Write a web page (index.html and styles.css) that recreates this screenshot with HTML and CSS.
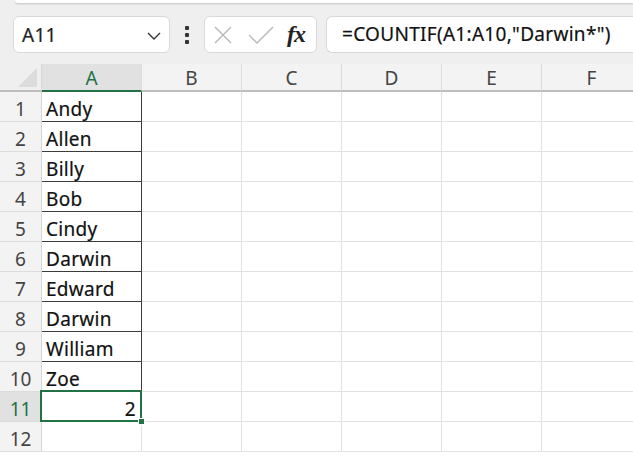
FILE: index.html
```html
<!DOCTYPE html>
<html>
<head>
<meta charset="utf-8">
<link rel="stylesheet" href="styles.css">
</head>
<body>
<div class="app">
  <div class="topstrip"><div class="ribbon-edge"></div></div>
  <div class="formula-bar">
    <div class="namebox">
      <span class="name">A11</span>
      <svg class="chev" width="14" height="8" viewBox="0 0 14 8"><path d="M1 1 L7 7 L13 1" fill="none" stroke="#333" stroke-width="1.4"/></svg>
    </div>
    <div class="dots"><span></span><span></span><span></span></div>
    <div class="fxbox">
      <svg class="icon-x" width="20" height="20" viewBox="0 0 20 20"><path d="M2 2 L18 18 M18 2 L2 18" stroke="#b8b8b8" stroke-width="1.4" fill="none"/></svg>
      <svg class="icon-check" width="26" height="18" viewBox="0 0 26 18"><path d="M1 9 L9 17 L25 1" stroke="#b8b8b8" stroke-width="1.4" fill="none"/></svg>
      <span class="fx">fx</span>
    </div>
    <div class="formula">=COUNTIF(A1:A10,"Darwin*")</div>
  </div>
  <div class="sheet">
    <div class="corner"><div class="tri"></div></div>
    <div class="colhead sel">A</div>
    <div class="colhead">B</div>
    <div class="colhead">C</div>
    <div class="colhead">D</div>
    <div class="colhead">E</div>
    <div class="colhead">F</div>

    <div class="rowhead">1</div><div class="cell a">Andy</div><div class="cell"></div><div class="cell"></div><div class="cell"></div><div class="cell"></div><div class="cell"></div>
    <div class="rowhead">2</div><div class="cell a">Allen</div><div class="cell"></div><div class="cell"></div><div class="cell"></div><div class="cell"></div><div class="cell"></div>
    <div class="rowhead">3</div><div class="cell a">Billy</div><div class="cell"></div><div class="cell"></div><div class="cell"></div><div class="cell"></div><div class="cell"></div>
    <div class="rowhead">4</div><div class="cell a">Bob</div><div class="cell"></div><div class="cell"></div><div class="cell"></div><div class="cell"></div><div class="cell"></div>
    <div class="rowhead">5</div><div class="cell a">Cindy</div><div class="cell"></div><div class="cell"></div><div class="cell"></div><div class="cell"></div><div class="cell"></div>
    <div class="rowhead">6</div><div class="cell a">Darwin</div><div class="cell"></div><div class="cell"></div><div class="cell"></div><div class="cell"></div><div class="cell"></div>
    <div class="rowhead">7</div><div class="cell a">Edward</div><div class="cell"></div><div class="cell"></div><div class="cell"></div><div class="cell"></div><div class="cell"></div>
    <div class="rowhead">8</div><div class="cell a">Darwin</div><div class="cell"></div><div class="cell"></div><div class="cell"></div><div class="cell"></div><div class="cell"></div>
    <div class="rowhead">9</div><div class="cell a">William</div><div class="cell"></div><div class="cell"></div><div class="cell"></div><div class="cell"></div><div class="cell"></div>
    <div class="rowhead">10</div><div class="cell a">Zoe</div><div class="cell"></div><div class="cell"></div><div class="cell"></div><div class="cell"></div><div class="cell"></div>
    <div class="rowhead sel">11</div><div class="cell active num">2<div class="selbox"><div class="handle"></div></div></div><div class="cell"></div><div class="cell"></div><div class="cell"></div><div class="cell"></div><div class="cell"></div>
    <div class="rowhead">12</div><div class="cell"></div><div class="cell"></div><div class="cell"></div><div class="cell"></div><div class="cell"></div><div class="cell"></div>
  </div>
</div>
</body>
</html>
```

FILE: styles.css
```css
* { box-sizing: border-box; }
html, body { margin: 0; padding: 0; }
body {
  width: 633px;
  height: 455px;
  overflow: hidden;
  background: #ffffff;
  font-family: "Noto Sans", "Open Sans", sans-serif;
}
.app {
  width: 633px;
  height: 455px;
  overflow: hidden;
  display: flex;
  flex-direction: column;
}
.topstrip {
  flex-shrink: 0;
  height: 16px;
  background: #efefef;
  padding-left: 15px;
}
.ribbon-edge {
  height: 3px;
  background: #ffffff;
  border-bottom-left-radius: 5px;
  box-shadow: 0 1px 2px rgba(0,0,0,0.18);
}
.formula-bar {
  flex-shrink: 0;
  height: 48px;
  background: #efefef;
  display: flex;
  align-items: flex-start;
  padding-left: 13px;
}
.namebox {
  flex-shrink: 0;
  width: 157px;
  height: 37px;
  background: #fff;
  border: 1px solid #d9d9d9;
  border-radius: 6px;
  display: flex;
  align-items: center;
  justify-content: space-between;
  padding: 0 8px 0 8px;
}
.name {
  font-size: 19px;
  letter-spacing: 0.3px;
  color: #222;
  -webkit-text-stroke: 0.2px #222;
}
.chev { margin-top: 2px; }
.dots {
  flex-shrink: 0;
  width: 34px;
  height: 37px;
  display: flex;
  flex-direction: column;
  align-items: center;
  justify-content: center;
  gap: 3px;
}
.dots span {
  width: 4px;
  height: 4px;
  background: #333;
  border-radius: 1px;
}
.fxbox {
  flex-shrink: 0;
  width: 113px;
  height: 37px;
  background: #fff;
  border: 1px solid #d9d9d9;
  border-radius: 6px;
  display: flex;
  align-items: center;
  padding-left: 8px;
}
.icon-x { margin-right: 15px; }
.icon-check { margin-right: 13px; margin-top: 1px; }
.fx {
  font-family: "Liberation Serif", "DejaVu Serif", serif;
  font-style: italic;
  font-weight: bold;
  font-size: 24px;
  color: #222;
  letter-spacing: -1px;
}
.formula {
  margin-left: 9px;
  flex: 1;
  height: 37px;
  background: #fff;
  border: 1px solid #d9d9d9;
  border-right: none;
  border-radius: 6px 0 0 6px;
  font-size: 19px;
  letter-spacing: 0.3px;
  color: #111;
  -webkit-text-stroke: 0.2px #111;
  padding-left: 15px;
  line-height: 35px;
  white-space: nowrap;
}
.sheet {
  flex-shrink: 0;
  display: grid;
  grid-template-columns: 42px repeat(6, 100px);
  grid-template-rows: 28px repeat(12, 30px);
  background: #fff;
}
.corner {
  background: #efefef;
  border-bottom: 2px solid #bdbdbd;
  border-right: 1px solid #d6d6d6;
  position: relative;
}
.tri {
  position: absolute;
  right: 4px;
  bottom: 3px;
  width: 0;
  height: 0;
  border-left: 19px solid transparent;
  border-bottom: 19px solid #dcdcdc;
}
.colhead {
  background: #f3f3f3;
  border-right: 1px solid #dcdcdc;
  border-bottom: 2px solid #bdbdbd;
  display: flex;
  align-items: center;
  justify-content: center;
  font-size: 19px;
  color: #444;
  padding-top: 1px;
}
.colhead.sel {
  background: #e1e1e1;
  color: #1e7145;
  border-bottom: 2px solid #217346;
}
.rowhead {
  background: #f3f3f3;
  border-right: 1px solid #d6d6d6;
  border-bottom: 1px solid #dcdcdc;
  display: flex;
  align-items: center;
  justify-content: center;
  padding-top: 4px;
  font-size: 19px;
  color: #444;
}
.rowhead.sel {
  background: #e1e1e1;
  color: #1e7145;
}
.cell {
  border-right: 1px solid #e1e1e1;
  border-bottom: 1px solid #e1e1e1;
  font-size: 19px;
  letter-spacing: 0.3px;
  color: #111;
  -webkit-text-stroke: 0.2px #111;
  display: flex;
  align-items: center;
  padding-left: 4px;
  padding-top: 4px;
  white-space: nowrap;
}
.cell.a {
  border-right: 1px solid #3c3c3c;
  border-bottom: 1px solid #3c3c3c;
}
.cell.num {
  justify-content: flex-end;
  padding-right: 5px;
  position: relative;
}
.selbox {
  position: absolute;
  left: -2px;
  top: -2px;
  right: -1px;
  bottom: -1px;
  border: 2px solid #217346;
}
.handle {
  position: absolute;
  right: -5px;
  bottom: -5px;
  width: 7px;
  height: 7px;
  background: #217346;
  border: 1px solid #fff;
}
```
